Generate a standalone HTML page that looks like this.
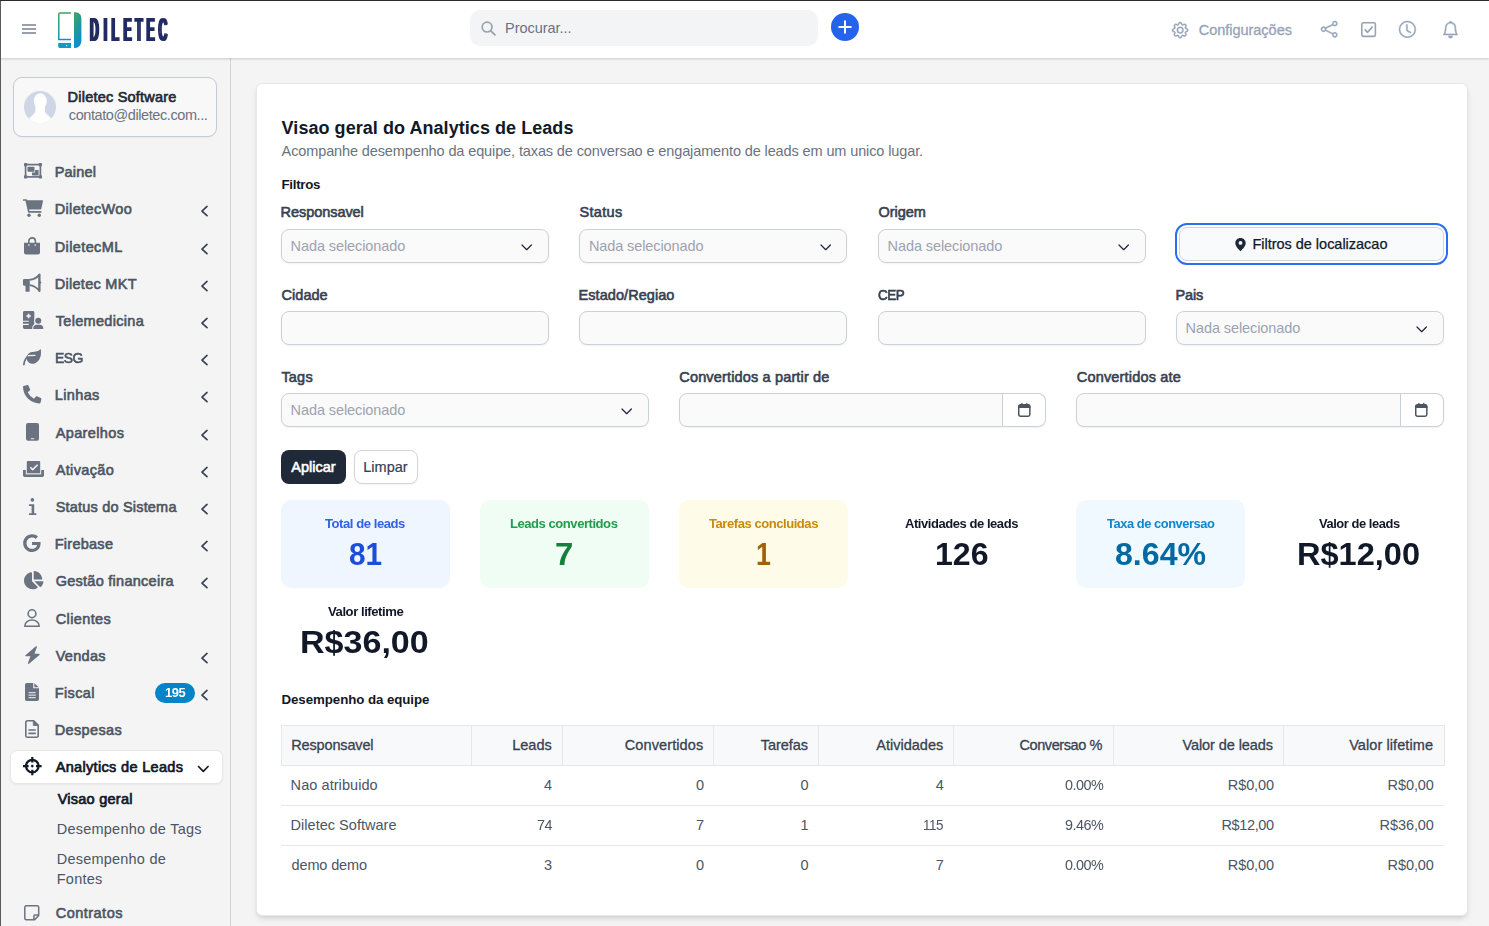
<!DOCTYPE html>
<html lang="pt-BR">
<head>
<meta charset="utf-8">
<title>Visao geral do Analytics de Leads - Diletec</title>
<style>

*{box-sizing:border-box;margin:0;padding:0}
html,body{width:1489px;height:926px;overflow:hidden;background:#f4f4f4;font-family:"Liberation Sans","DejaVu Sans",sans-serif;color:#111827}
ul,li{list-style:none}
a{color:inherit;text-decoration:none}
.t{position:absolute;display:block;white-space:pre;line-height:1;transform-origin:0 0;font-weight:400;margin:0}
button{border:0;font:inherit}
.abs,.ico{position:absolute;display:block}
.ico{overflow:visible}
#frame-top{left:0;top:0;width:1489px;height:1px;background:#2a2b2b;z-index:20}
#frame-left{left:0;top:0;width:1px;height:926px;background:#5a5a5a;z-index:19}
#topbar{left:0;top:0;width:1489px;height:58px;background:#fff;box-shadow:0 1px 2px rgba(0,0,0,.13),0 1px 4px rgba(0,0,0,.06);z-index:10}
.bar{left:22px;width:14px;height:2px;background:#9aa0ab}
#search{left:470px;top:10px;width:348px;height:36px;border-radius:10px;background:#f3f4f6}
#plus{left:831px;top:13px;width:28px;height:28px;border-radius:50%;background:#2563eb}
#sidebar{left:0;top:58px;width:231px;height:868px;border-right:1px solid #cdd5e1;background:#f4f4f4;z-index:5}
#user{left:13px;top:19px;width:204px;height:60px;border:1px solid #c6cad3;border-radius:9px;background:#f8f8f9;box-shadow:0 1px 1px rgba(0,0,0,.04)}
#avatar{left:24px;top:32.800px;width:32px;height:32.600px;border-radius:50%;background:#cfd6e6;overflow:hidden}
#active{left:9.5px;top:692px;width:213px;height:34px;border-radius:7px;background:#fff;border:1px solid #e6e8ec;box-shadow:0 1px 2px rgba(0,0,0,.05)}
#badge{left:155px;top:625px;width:40px;height:20px;border-radius:10px;background:#0284c7}
#card{left:256px;top:83px;width:1212px;height:833px;background:#fff;border-radius:6px;border:1px solid #e4e7eb;box-shadow:0 4px 6px -1px rgba(0,0,0,.1),0 2px 4px -2px rgba(0,0,0,.1)}
.inp{height:34px;border:1px solid #ccd1d9;border-radius:8px;background:#fafafb;box-shadow:0 1px 2px rgba(16,24,40,.06)}
.inp.l{border-radius:8px 0 0 8px}
.inp.r{border-radius:0 8px 8px 0;border-left:none;background:#fff}
#locbtn{left:1179px;top:227px;width:265px;height:34px;border:1px solid #d1d5db;border-radius:8px;background:#f9fafb;outline:2px solid #2a6ff0;outline-offset:2px}
#apply{left:281px;top:450px;width:65px;height:34px;border-radius:8px;background:#1f2937}
#clear{left:354px;top:450px;width:64px;height:34px;border-radius:8px;background:#fff;border:1px solid #d1d5db;box-shadow:0 1px 2px rgba(0,0,0,.05)}
.stat{top:500px;width:169px;height:88px;border-radius:10px}
.th{top:725px;height:41px;background:#f8f9fa;border:1px solid #e5e7eb;border-left:none}
.th.first{border-left:1px solid #e5e7eb}
.rowline{left:281px;width:1163px;height:1px;background:#e5e7eb}

</style>
</head>
<body>
<div id="frame-top" class="abs"></div><div id="frame-left" class="abs"></div>
<header id="topbar" class="abs">
<button class="abs" style="left:14px;top:17px;width:30px;height:24px;border:0;background:none" aria-label="menu"><i class="abs bar" style="left:8px;top:7px"></i><i class="abs bar" style="left:8px;top:11px"></i><i class="abs bar" style="left:8px;top:15px"></i></button>
<svg class="ico" style="left:57.5px;top:12px" width="112" height="36" viewBox="0 0 112 36" role="img" aria-label="Diletec" ><defs><linearGradient id="lg" x1="0" y1="0" x2="0.35" y2="1"><stop offset="0" stop-color="#45a45a"/><stop offset="0.5" stop-color="#1f9a96"/><stop offset="1" stop-color="#0a8fd0"/></linearGradient></defs><filter id="fat" x="-5%" y="-5%" width="110%" height="110%"><feMorphology operator="dilate" radius="1 0"/></filter><path d="M12.9 1.1 H1.9 A1.1 1.1 0 0 0 .8 2.2 V27.6 H12.9" fill="none" stroke="url(#lg)" stroke-width="1.5"/><path d="M.2 30.9 H13 V35.9 H1.6 A1.4 1.4 0 0 1 .2 34.5 Z" fill="#119ac4"/><rect x="8" y="33" width="1.2" height="1.2" fill="#d8f0fa"/><path d="M16 .2 H17.5 C21.5 .2 23.4 3.2 23.4 7 V28.5 C23.4 33 20.5 35.9 17 35.9 H16 Z" fill="url(#lg)"/><g filter="url(#fat)"><text transform="scale(0.375,1)" x="85.10 121.86 142.97 174.43 205.72 236.30 268.11" y="29.2" font-family="Liberation Sans, DejaVu Sans, sans-serif" font-weight="700" font-size="32.4" fill="#232a63">DILETEC</text></g></svg>
<form id="search" class="abs" role="search"><svg class="ico" style="left:10.5px;top:11.2px" width="15" height="15" viewBox="0 0 15 15" aria-hidden="true" ><circle cx="6.1" cy="6.1" r="4.9" fill="none" stroke="#9ca3af" stroke-width="1.7"/><path d="M9.8 9.8 L13.9 13.9" stroke="#9ca3af" stroke-width="1.9" stroke-linecap="round"/></svg><span class="t" style="left:35.00px;top:11.00px;font-size:14.5px;letter-spacing:-0.026px;color:#6b7280;">Procurar...</span></form>
<a id="plus" class="abs"><svg class="ico" style="left:7px;top:7px" width="14" height="14" viewBox="0 0 14 14" aria-hidden="true" ><path d="M7 1.2 V12.8 M1.2 7 H12.8" stroke="#fff" stroke-width="2" stroke-linecap="round"/></svg></a>
<nav>
<svg class="ico" style="left:1171.7px;top:21.7px" width="16.3" height="16.3" viewBox="0 0 16 16" aria-hidden="true" fill="#94a3b8" stroke="#94a3b8" stroke-width=".5"><path d="M8 4.754a3.246 3.246 0 1 0 0 6.492 3.246 3.246 0 0 0 0-6.492zM5.754 8a2.246 2.246 0 1 1 4.492 0 2.246 2.246 0 0 1-4.492 0z"/><path d="M9.796 1.343c-.527-1.79-3.065-1.79-3.592 0l-.094.319a.873.873 0 0 1-1.255.52l-.292-.16c-1.64-.892-3.433.902-2.54 2.541l.159.292a.873.873 0 0 1-.52 1.255l-.319.094c-1.79.527-1.79 3.065 0 3.592l.319.094a.873.873 0 0 1 .52 1.255l-.16.292c-.892 1.64.901 3.434 2.541 2.54l.292-.159a.873.873 0 0 1 1.255.52l.094.319c.527 1.79 3.065 1.79 3.592 0l.094-.319a.873.873 0 0 1 1.255-.52l.292.16c1.64.893 3.434-.902 2.54-2.541l-.159-.292a.873.873 0 0 1 .52-1.255l.319-.094c1.79-.527 1.79-3.065 0-3.592l-.319-.094a.873.873 0 0 1-.52-1.255l.16-.292c.893-1.64-.902-3.433-2.541-2.54l-.292.159a.873.873 0 0 1-1.255-.52l-.094-.319zm-2.633.283c.246-.835 1.428-.835 1.674 0l.094.319a1.873 1.873 0 0 0 2.693 1.115l.291-.16c.764-.415 1.6.42 1.184 1.185l-.159.292a1.873 1.873 0 0 0 1.116 2.692l.318.094c.835.246.835 1.428 0 1.674l-.319.094a1.873 1.873 0 0 0-1.115 2.693l.16.291c.415.764-.42 1.6-1.185 1.184l-.291-.159a1.873 1.873 0 0 0-2.693 1.116l-.094.318c-.246.835-1.428.835-1.674 0l-.094-.319a1.873 1.873 0 0 0-2.692-1.115l-.292.16c-.764.415-1.6-.42-1.184-1.185l.159-.291A1.873 1.873 0 0 0 1.945 8.93l-.319-.094c-.835-.246-.835-1.428 0-1.674l.319-.094A1.873 1.873 0 0 0 3.06 4.377l-.16-.292c-.415-.764.42-1.6 1.185-1.184l.292.159a1.873 1.873 0 0 0 2.692-1.115l.094-.319z"/></svg>
<span class="t" style="left:1198.70px;top:22.70px;font-size:14.5px;letter-spacing:-0.021px;color:#94a3b8;-webkit-text-stroke:0.3px currentColor;">Configurações</span>
<svg class="ico" style="left:1321.3px;top:21.2px" width="16.4" height="16.4" viewBox="0 0 16 16" aria-hidden="true" fill="#94a3b8" stroke="#94a3b8" stroke-width=".5"><path d="M13.5 1a1.5 1.5 0 1 0 0 3 1.5 1.5 0 0 0 0-3zM11 2.500a2.500 2.500 0 1 1 .603 1.628l-6.718 3.120a2.499 2.499 0 0 1 0 1.504l6.718 3.120a2.500 2.500 0 1 1-.488.876l-6.718-3.120a2.500 2.500 0 1 1 0-3.256l6.718-3.120A2.500 2.500 0 0 1 11 2.500zm-8.500 4a1.500 1.500 0 1 0 0 3 1.500 1.500 0 0 0 0-3zm11 5.500a1.500 1.500 0 1 0 0 3 1.500 1.500 0 0 0 0-3z"/></svg>
<svg class="ico" style="left:1361px;top:22px" width="15.2" height="15.2" viewBox="0 0 15.2 15.2" aria-hidden="true" ><rect x=".8" y=".8" width="13.6" height="13.6" rx="1.6" fill="none" stroke="#94a3b8" stroke-width="1.6"/><path d="M4.2 7.9 L6.6 10.3 L11.1 5.1" fill="none" stroke="#94a3b8" stroke-width="1.7" stroke-linecap="round" stroke-linejoin="round"/></svg>
<svg class="ico" style="left:1399.2px;top:21.1px" width="16.8" height="16.8" viewBox="0 0 16 16" aria-hidden="true" fill="#94a3b8" stroke="#94a3b8" stroke-width=".5"><path d="M8 3.500a.500.500 0 0 0-1 0V9a.500.500 0 0 0 .252.434l3.500 2a.500.500 0 0 0 .496-.868L8 8.710V3.500z"/><path d="M8 16A8 8 0 1 0 8 0a8 8 0 0 0 0 16zm7-8A7 7 0 1 1 1 8a7 7 0 0 1 14 0z"/></svg>
<svg class="ico" style="left:1441.7px;top:20.6px" width="17" height="17.3" viewBox="0 0 16 16" aria-hidden="true" fill="#94a3b8" stroke="#94a3b8" stroke-width=".5"><path d="M8 16a2 2 0 0 0 2-2H6a2 2 0 0 0 2 2zM8 1.918l-.797.161A4.002 4.002 0 0 0 4 6c0 .628-.134 2.197-.459 3.742-.16.767-.376 1.566-.663 2.258h10.244c-.287-.692-.502-1.490-.663-2.258C12.134 8.197 12 6.628 12 6a4.002 4.002 0 0 0-3.203-3.920L8 1.917zM14.220 12c.223.447.481.801.780 1H1c.299-.199.557-.553.780-1C2.680 10.200 3 6.880 3 6c0-2.420 1.720-4.440 4.005-4.901a1 1 0 1 1 1.990 0A5.002 5.002 0 0 1 13 6c0 .880.320 4.200 1.220 6z"/></svg>
</nav>
</header>
<aside id="sidebar" class="abs">
<div id="user" class="abs"></div>
<div id="avatar" class="abs"><svg class="ico" style="left:0px;top:0px" width="32" height="32" viewBox="0 0 32 32" aria-hidden="true" ><ellipse cx="16.300" cy="9.900" rx="6.500" ry="7.700" fill="#fff"/><path d="M11.400 14 V19.500 C11.400 23 7.300 24.200 4.300 28.800 V33 H28.300 V28.800 C25.300 24.200 20.900 23 20.900 19.500 V14 Z" fill="#fff"/></svg></div>
<span class="t" style="left:67.60px;top:32.00px;font-size:14.5px;letter-spacing:0.213px;color:#1f2937;-webkit-text-stroke:0.65px currentColor;">Diletec Software</span>
<span class="t" style="left:68.80px;top:49.80px;font-size:14.5px;letter-spacing:-0.413px;color:#6b7280;">contato@diletec.com...</span>
<ul>
<li>
<svg class="ico" style="left:24.2px;top:105.2px" width="18" height="15.5" viewBox="0 0 18 15.5" aria-hidden="true" ><rect x="1.600" y="1.600" width="14.800" height="12.300" fill="none" stroke="#6b7280" stroke-width="1.700"/><rect x="0" y="0" width="3.300" height="3.300" rx=".7" fill="#6b7280"/><rect x="0" y="12.2" width="3.300" height="3.300" rx=".7" fill="#6b7280"/><rect x="14.7" y="0" width="3.300" height="3.300" rx=".7" fill="#6b7280"/><rect x="14.7" y="12.2" width="3.300" height="3.300" rx=".7" fill="#6b7280"/><rect x="8" y="6.900" width="6.600" height="5.600" rx=".7" fill="#6b7280"/><rect x="2.900" y="3.100" width="8.200" height="6.300" rx=".9" fill="#f4f4f4"/><rect x="3.500" y="3.700" width="7" height="5" rx=".7" fill="#6b7280"/></svg>
<span class="t" style="left:54.70px;top:107.00px;font-size:14.5px;letter-spacing:0.183px;color:#4b5563;-webkit-text-stroke:0.6px currentColor;">Painel</span>
</li>
<li>
<svg class="ico" style="left:23.1px;top:141.1px" width="20.2" height="18.2" viewBox="0 0 20.2 18.2" aria-hidden="true" ><path d="M.700 1 H3.200 L5.800 12.900 H17.700" fill="none" stroke="#6b7280" stroke-width="1.700" stroke-linecap="round" stroke-linejoin="round"/><path d="M3.600 1.200 H19.400 A.7 .7 0 0 1 20 2 L18.300 9.700 A.9 .9 0 0 1 17.500 10.400 H5.500 Z" fill="#6b7280"/><circle cx="6" cy="16.300" r="1.700" fill="#6b7280"/><circle cx="16.300" cy="16.300" r="1.700" fill="#6b7280"/></svg>
<span class="t" style="left:54.70px;top:144.00px;font-size:14.5px;letter-spacing:0.355px;color:#4b5563;-webkit-text-stroke:0.6px currentColor;">DiletecWoo</span>
<svg class="ico" style="left:200.2px;top:146.7px" width="9" height="12.2" viewBox="0 0 9 12.2" aria-hidden="true" ><path d="M7 1.500 L2 6.100 L7 10.700" fill="none" stroke="#374151" stroke-width="1.700" stroke-linecap="round" stroke-linejoin="round"/></svg>
</li>
<li>
<svg class="ico" style="left:24.2px;top:179.2px" width="16" height="17.7" viewBox="0 0 16 17.7" aria-hidden="true" ><path d="M4.800 6.500 V4.200 A3.300 3.300 0 0 1 11.400 4.200 V6.500" fill="none" stroke="#6b7280" stroke-width="1.600"/><path d="M0 5.700 H16 V15.300 A2.300 2.300 0 0 1 13.700 17.600 H2.300 A2.300 2.300 0 0 1 0 15.300 Z" fill="#6b7280"/><circle cx="4.900" cy="8.100" r=".800" fill="#f4f4f4"/><circle cx="11.200" cy="8.100" r=".800" fill="#f4f4f4"/></svg>
<span class="t" style="left:54.70px;top:182.00px;font-size:14.5px;letter-spacing:0.388px;color:#4b5563;-webkit-text-stroke:0.6px currentColor;">DiletecML</span>
<svg class="ico" style="left:200.2px;top:184.7px" width="9" height="12.2" viewBox="0 0 9 12.2" aria-hidden="true" ><path d="M7 1.500 L2 6.100 L7 10.700" fill="none" stroke="#374151" stroke-width="1.700" stroke-linecap="round" stroke-linejoin="round"/></svg>
</li>
<li>
<svg class="ico" style="left:22.9px;top:216px" width="18.6" height="18" viewBox="0 0 18.6 18" aria-hidden="true" ><path d="M1.200 5 H6.800 V11.700 H6.600 V17.200 A.5 .5 0 0 1 6.100 17.700 H3 A.5 .5 0 0 1 2.500 17.200 V11.700 H1.200 A1.200 1.200 0 0 1 0 10.500 V6.200 A1.200 1.200 0 0 1 1.200 5 Z" fill="#6b7280"/><path d="M6.600 5.800 C10.500 5.500 13.800 3.700 16.300 .900 V16.600 C13.800 13.800 10.500 11.400 6.600 11.100" fill="none" stroke="#6b7280" stroke-width="1.900" stroke-linejoin="round"/><path d="M16.500 .300 V17.200" stroke="#6b7280" stroke-width="1.800" stroke-linecap="round"/><circle cx="17.300" cy="8.600" r="1.100" fill="#6b7280"/></svg>
<span class="t" style="left:54.70px;top:219.00px;font-size:14.5px;letter-spacing:0.290px;color:#4b5563;-webkit-text-stroke:0.6px currentColor;">Diletec MKT</span>
<svg class="ico" style="left:200.2px;top:221.7px" width="9" height="12.2" viewBox="0 0 9 12.2" aria-hidden="true" ><path d="M7 1.500 L2 6.100 L7 10.700" fill="none" stroke="#374151" stroke-width="1.700" stroke-linecap="round" stroke-linejoin="round"/></svg>
</li>
<li>
<svg class="ico" style="left:22.9px;top:252.8px" width="21" height="18.2" viewBox="0 0 21 18.2" aria-hidden="true" ><rect x="0" y="0" width="11.300" height="18" rx="1.500" fill="#6b7280"/><path d="M5.600 2.700 V7.300 M3.300 5 H7.900" stroke="#f4f4f4" stroke-width="1.600"/><path d="M0 10.200 H5.700 M0 13.400 H5.700" stroke="#f4f4f4" stroke-width="1.100"/><path d="M10.200 18.400 V17 C10.200 15 11.700 13.700 13.700 13.700 H16.800 C18.800 13.700 20.300 15 20.300 17 V18.400 Z" fill="#f4f4f4" stroke="#f4f4f4" stroke-width="2"/><circle cx="15.250" cy="9.850" r="3.900" fill="#f4f4f4"/><path d="M10.200 18.400 V17 C10.200 15 11.700 13.700 13.700 13.700 H16.800 C18.800 13.700 20.300 15 20.300 17 V18.400 Z" fill="#6b7280"/><rect x="9" y="18" width="12.500" height="1.600" fill="#f4f4f4"/><circle cx="15.250" cy="9.850" r="3" fill="#6b7280"/></svg>
<span class="t" style="left:55.70px;top:256.00px;font-size:14.5px;letter-spacing:0.312px;color:#4b5563;-webkit-text-stroke:0.6px currentColor;">Telemedicina</span>
<svg class="ico" style="left:200.2px;top:258.7px" width="9" height="12.2" viewBox="0 0 9 12.2" aria-hidden="true" ><path d="M7 1.500 L2 6.100 L7 10.700" fill="none" stroke="#374151" stroke-width="1.700" stroke-linecap="round" stroke-linejoin="round"/></svg>
</li>
<li>
<svg class="ico" style="left:22.7px;top:291.1px" width="19" height="16" viewBox="0 0 19 16" aria-hidden="true" ><path d="M17.700 .100 C15 3.500 10.500 2.300 7.200 3.600 C4.300 4.800 3.200 7.600 3.700 10.300 C4.400 13.700 8.200 15.600 11.600 14.400 C16.800 12.500 19 6.500 17.700 .100 Z" fill="#6b7280"/><path d="M.900 15.500 C1.300 11.200 3.300 8 6.800 6.300" fill="none" stroke="#6b7280" stroke-width="1.800" stroke-linecap="round"/><path d="M5.300 6.700 C7.300 6.300 9.500 6.300 12 6.300" fill="none" stroke="#f4f4f4" stroke-width="1.300" stroke-linecap="round"/></svg>
<span class="t" style="left:54.74px;top:293.00px;font-size:14.5px;letter-spacing:-0.508px;transform:scaleX(0.9602);color:#4b5563;-webkit-text-stroke:0.6px currentColor;">ESG</span>
<svg class="ico" style="left:200.2px;top:295.7px" width="9" height="12.2" viewBox="0 0 9 12.2" aria-hidden="true" ><path d="M7 1.500 L2 6.100 L7 10.700" fill="none" stroke="#374151" stroke-width="1.700" stroke-linecap="round" stroke-linejoin="round"/></svg>
</li>
<li>
<svg class="ico" style="left:22.7px;top:326.8px" width="18.4" height="18.4" viewBox="0 0 512 512" aria-hidden="true" ><path d="M497.39 361.8l-112-48a24 24 0 0 0-28 6.900l-49.600 60.600A370.660 370.660 0 0 1 130.600 204.110l60.600-49.600a23.940 23.940 0 0 0 6.900-28l-48-112A24.160 24.160 0 0 0 122.600.610l-104 24A24 24 0 0 0 0 48c0 256.500 207.900 464 464 464a24 24 0 0 0 23.400-18.600l24-104a24.290 24.290 0 0 0-14.010-27.600z" fill="#6b7280"/></svg>
<span class="t" style="left:54.70px;top:330.00px;font-size:14.5px;letter-spacing:0.384px;color:#4b5563;-webkit-text-stroke:0.6px currentColor;">Linhas</span>
<svg class="ico" style="left:200.2px;top:332.7px" width="9" height="12.2" viewBox="0 0 9 12.2" aria-hidden="true" ><path d="M7 1.500 L2 6.100 L7 10.700" fill="none" stroke="#374151" stroke-width="1.700" stroke-linecap="round" stroke-linejoin="round"/></svg>
</li>
<li>
<svg class="ico" style="left:25.7px;top:365.2px" width="13" height="17.8" viewBox="0 0 13 17.8" aria-hidden="true" ><rect x="0" y="0" width="13" height="17.800" rx="2" fill="#6b7280"/><rect x="4.800" y="15" width="3.400" height="1.300" fill="#c9ccd3"/></svg>
<span class="t" style="left:55.70px;top:368.00px;font-size:14.5px;letter-spacing:0.370px;color:#4b5563;-webkit-text-stroke:0.6px currentColor;">Aparelhos</span>
<svg class="ico" style="left:200.2px;top:370.7px" width="9" height="12.2" viewBox="0 0 9 12.2" aria-hidden="true" ><path d="M7 1.500 L2 6.100 L7 10.700" fill="none" stroke="#374151" stroke-width="1.700" stroke-linecap="round" stroke-linejoin="round"/></svg>
</li>
<li>
<svg class="ico" style="left:22.6px;top:403px" width="21" height="16" viewBox="0 0 21 16" aria-hidden="true" ><path d="M0 9 H2.800 V12.700 H18.200 V9 H21 V14.300 A1.700 1.700 0 0 1 19.300 16 H1.700 A1.700 1.700 0 0 1 0 14.300 Z" fill="#6b7280"/><rect x="3.800" y="0" width="13.400" height="12.500" rx="1" fill="#6b7280"/><path d="M7.200 6.200 L9.700 8.600 L14.600 3.700" fill="none" stroke="#f4f4f4" stroke-width="1.500"/><rect x="2.800" y="12.500" width="15.400" height=".9" fill="#f4f4f4"/></svg>
<span class="t" style="left:55.70px;top:405.00px;font-size:14.5px;letter-spacing:0.350px;color:#4b5563;-webkit-text-stroke:0.6px currentColor;">Ativação</span>
<svg class="ico" style="left:200.2px;top:407.7px" width="9" height="12.2" viewBox="0 0 9 12.2" aria-hidden="true" ><path d="M7 1.500 L2 6.100 L7 10.700" fill="none" stroke="#374151" stroke-width="1.700" stroke-linecap="round" stroke-linejoin="round"/></svg>
</li>
<li>
<svg class="ico" style="left:27.8px;top:440px" width="9" height="17" viewBox="0 0 9 17" aria-hidden="true" ><circle cx="4.400" cy="1.900" r="1.800" fill="#6b7280"/><path d="M1.400 6.200 H6.200 V15.200 H7.900 A.5 .5 0 0 1 8.400 15.700 V16.500 A.5 .5 0 0 1 7.900 17 H1.400 A.5 .5 0 0 1 .900 16.500 V15.700 A.5 .5 0 0 1 1.400 15.200 H3.600 V8 H1.400 A.5 .5 0 0 1 .900 7.500 V6.700 A.5 .5 0 0 1 1.400 6.200 Z" fill="#6b7280"/></svg>
<span class="t" style="left:55.70px;top:442.00px;font-size:14.5px;letter-spacing:0.193px;color:#4b5563;-webkit-text-stroke:0.6px currentColor;">Status do Sistema</span>
<svg class="ico" style="left:200.2px;top:444.7px" width="9" height="12.2" viewBox="0 0 9 12.2" aria-hidden="true" ><path d="M7 1.500 L2 6.100 L7 10.700" fill="none" stroke="#374151" stroke-width="1.700" stroke-linecap="round" stroke-linejoin="round"/></svg>
</li>
<li>
<svg class="ico" style="left:23.2px;top:475.9px" width="17.8" height="18.3" viewBox="0 0 488 512" aria-hidden="true" ><path d="M488 261.800C488 403.300 391.100 504 248 504 110.800 504 0 393.200 0 256S110.800 8 248 8c66.800 0 123 24.500 166.300 64.900l-67.500 64.900C258.500 52.600 94.300 116.600 94.300 256c0 86.500 69.100 156.600 153.700 156.600 98.200 0 135-70.400 140.800-106.900H248v-85.300h236.100c2.300 12.700 3.900 24.900 3.900 41.400z" fill="#6b7280"/></svg>
<span class="t" style="left:54.70px;top:479.00px;font-size:14.5px;letter-spacing:0.264px;color:#4b5563;-webkit-text-stroke:0.6px currentColor;">Firebase</span>
<svg class="ico" style="left:200.2px;top:481.7px" width="9" height="12.2" viewBox="0 0 9 12.2" aria-hidden="true" ><path d="M7 1.500 L2 6.100 L7 10.700" fill="none" stroke="#374151" stroke-width="1.700" stroke-linecap="round" stroke-linejoin="round"/></svg>
</li>
<li>
<svg class="ico" style="left:24px;top:512.7px" width="19.4" height="18.3" viewBox="0 0 544 512" aria-hidden="true" ><path d="M527.790 288H290.500l158.030 158.030c6.040 6.040 15.980 6.530 22.190.680 38.700-36.460 65.320-85.610 73.130-140.860 1.340-9.460-6.510-17.850-16.060-17.850zm-15.830-64.800C503.720 103.740 408.260 8.280 288.800.040 279.680-.590 272 7.100 272 16.240V240h223.770c9.140 0 16.820-7.680 16.190-16.800zM224 288V50.710c0-9.550-8.390-17.400-17.840-16.060C86.990 51.490-4.100 155.600.140 280.370 4.500 408.510 114.830 513.590 243.030 511.980c50.400-.630 96.970-16.870 135.260-44.030 7.900-5.600 8.420-17.230 1.570-24.080L224 288z" fill="#6b7280"/></svg>
<span class="t" style="left:55.70px;top:516.00px;font-size:14.5px;letter-spacing:0.263px;color:#4b5563;-webkit-text-stroke:0.6px currentColor;">Gestão financeira</span>
<svg class="ico" style="left:200.2px;top:518.7px" width="9" height="12.2" viewBox="0 0 9 12.2" aria-hidden="true" ><path d="M7 1.500 L2 6.100 L7 10.700" fill="none" stroke="#374151" stroke-width="1.700" stroke-linecap="round" stroke-linejoin="round"/></svg>
</li>
<li>
<svg class="ico" style="left:24.2px;top:550.9px" width="16" height="18.2" viewBox="0 0 16 18.2" aria-hidden="true" ><circle cx="8" cy="4.700" r="3.900" fill="none" stroke="#6b7280" stroke-width="1.600"/><path d="M.800 17.300 C.800 9 15.200 9 15.200 17.300 Z" fill="none" stroke="#6b7280" stroke-width="1.600" stroke-linejoin="round"/></svg>
<span class="t" style="left:55.70px;top:554.00px;font-size:14.5px;letter-spacing:0.381px;color:#4b5563;-webkit-text-stroke:0.6px currentColor;">Clientes</span>
</li>
<li>
<svg class="ico" style="left:24.8px;top:587.8px" width="15" height="18.2" viewBox="0 0 15 18.2" aria-hidden="true" ><path d="M11.300 .800 L.900 9.700 H6.300 L3.600 17.300 L14 8.400 H8.600 Z" fill="#6b7280" stroke="#6b7280" stroke-width="1.300" stroke-linejoin="round"/></svg>
<span class="t" style="left:55.70px;top:591.00px;font-size:14.5px;letter-spacing:0.294px;color:#4b5563;-webkit-text-stroke:0.6px currentColor;">Vendas</span>
<svg class="ico" style="left:200.2px;top:593.7px" width="9" height="12.2" viewBox="0 0 9 12.2" aria-hidden="true" ><path d="M7 1.500 L2 6.100 L7 10.700" fill="none" stroke="#374151" stroke-width="1.700" stroke-linecap="round" stroke-linejoin="round"/></svg>
</li>
<li>
<svg class="ico" style="left:25.1px;top:625px" width="14" height="18" viewBox="0 0 14 18" aria-hidden="true" ><path d="M1.800 0 H8.200 V5.200 H14 V16.200 A1.800 1.800 0 0 1 12.200 18 H1.800 A1.800 1.800 0 0 1 0 16.200 V1.800 A1.800 1.800 0 0 1 1.800 0 Z" fill="#6b7280"/><path d="M9.300 .200 L13.800 4.300 H9.300 Z" fill="#6b7280"/><path d="M3.600 9.700 H10.600 M3.600 12.200 H10.600 M3.600 14.700 H10.600" stroke="#f4f4f4" stroke-width="1"/><path d="M3.600 12.200 H10.600" stroke="#b9bcc4" stroke-width="1.100"/></svg>
<span class="t" style="left:54.70px;top:628.00px;font-size:14.5px;letter-spacing:0.391px;color:#4b5563;-webkit-text-stroke:0.6px currentColor;">Fiscal</span>
<span id="badge" class="abs"><span class="t" style="left:9.90px;top:3.00px;font-size:13px;font-weight:700;letter-spacing:-0.455px;transform:scaleX(0.9927);color:#fff;">195</span></span>
<svg class="ico" style="left:200.2px;top:630.7px" width="9" height="12.2" viewBox="0 0 9 12.2" aria-hidden="true" ><path d="M7 1.500 L2 6.100 L7 10.700" fill="none" stroke="#374151" stroke-width="1.700" stroke-linecap="round" stroke-linejoin="round"/></svg>
</li>
<li>
<svg class="ico" style="left:25.1px;top:662px" width="14" height="18" viewBox="0 0 14 18" aria-hidden="true" ><path d="M2.300 .800 H8.700 L13.200 5 V15.700 A1.500 1.500 0 0 1 11.700 17.200 H2.300 A1.500 1.500 0 0 1 .800 15.700 V2.300 A1.500 1.500 0 0 1 2.300 .800 Z" fill="none" stroke="#6b7280" stroke-width="1.600" stroke-linejoin="round"/><path d="M8.300 .800 V5.500 H13.200 L8.700 .800 Z" fill="#6b7280" stroke="#6b7280" stroke-width=".8" stroke-linejoin="round"/><path d="M4 10 H10.200 M4 13.400 H10.200" stroke="#6b7280" stroke-width="1.600" stroke-linecap="round"/></svg>
<span class="t" style="left:54.70px;top:665.00px;font-size:14.5px;letter-spacing:0.367px;color:#4b5563;-webkit-text-stroke:0.6px currentColor;">Despesas</span>
</li>
<li><div id="active" class="abs"></div>
<svg class="ico" style="left:22.6px;top:699px" width="18.6" height="18.2" viewBox="0 0 18.6 18.2" aria-hidden="true" ><circle cx="9.300" cy="9.100" r="6.300" fill="none" stroke="#111827" stroke-width="2.200"/><path d="M9.300 0 V5.400 M9.300 12.800 V18.200 M0 9.100 H5.600 M13 9.100 H18.600" stroke="#111827" stroke-width="2.200"/><circle cx="9.300" cy="9.100" r="1.300" fill="#111827"/></svg>
<span class="t" style="left:55.70px;top:702.00px;font-size:14.5px;letter-spacing:0.326px;color:#111827;-webkit-text-stroke:0.7px currentColor;">Analytics de Leads</span>
<svg class="ico" style="left:196.8px;top:707px" width="12.6" height="8" viewBox="0 0 12.6 8" aria-hidden="true" ><path d="M1.500 1.500 L6.300 6.300 L11.100 1.500" fill="none" stroke="#111827" stroke-width="1.700" stroke-linecap="round" stroke-linejoin="round"/></svg>
<ul>
<li><span class="t" style="left:57.70px;top:734.00px;font-size:14.5px;letter-spacing:0.244px;color:#111827;-webkit-text-stroke:0.7px currentColor;">Visao geral</span></li>
<li><span class="t" style="left:56.70px;top:764.00px;font-size:14.5px;letter-spacing:0.235px;color:#4b5563;">Desempenho de Tags</span></li>
<li><span class="t" style="left:56.70px;top:793.60px;font-size:14.5px;letter-spacing:0.221px;color:#4b5563;">Desempenho de</span><span class="t" style="left:56.70px;top:813.70px;font-size:14.5px;letter-spacing:0.264px;color:#4b5563;">Fontes</span></li>
</ul></li>
<li><svg class="ico" style="left:24.4px;top:847.4px" width="15.5" height="15.4" viewBox="0 0 15.5 15.4" aria-hidden="true" ><path d="M2.300 .750 H13.200 A1.500 1.500 0 0 1 14.700 2.250 V10.600 L10.700 14.650 H2.300 A1.500 1.500 0 0 1 .800 13.150 V2.250 A1.500 1.500 0 0 1 2.300 .750 Z" fill="none" stroke="#6b7280" stroke-width="1.500" stroke-linejoin="round"/><path d="M9.900 14.400 V11 A1 1 0 0 1 10.900 10 H14.500" fill="none" stroke="#6b7280" stroke-width="1.500"/></svg><span class="t" style="left:55.70px;top:848.30px;font-size:14.5px;letter-spacing:0.486px;color:#4b5563;-webkit-text-stroke:0.6px currentColor;">Contratos</span></li>
</ul>
</aside>
<main>
<section id="card" class="abs"><div class="abs" style="left:-257px;top:-84px;width:0;height:0">
<h1 class="t" style="left:281.60px;top:119.00px;font-size:18px;font-weight:700;letter-spacing:0.054px;color:#111827;">Visao geral do Analytics de Leads</h1>
<p class="t" style="left:281.60px;top:144.00px;font-size:14.5px;letter-spacing:-0.117px;color:#6b7280;">Acompanhe desempenho da equipe, taxas de conversao e engajamento de leads em um unico lugar.</p>
<h2 class="t" style="left:281.50px;top:178.30px;font-size:13.3px;font-weight:700;letter-spacing:-0.273px;color:#111827;">Filtros</h2>
<label class="t" style="left:280.60px;top:204.80px;font-size:14.5px;letter-spacing:-0.061px;color:#374151;-webkit-text-stroke:0.6px currentColor;">Responsavel</label>
<label class="t" style="left:579.60px;top:204.80px;font-size:14.5px;letter-spacing:0.289px;color:#374151;-webkit-text-stroke:0.6px currentColor;">Status</label>
<label class="t" style="left:878.40px;top:204.80px;font-size:14.5px;letter-spacing:-0.031px;color:#374151;-webkit-text-stroke:0.6px currentColor;">Origem</label>
<div class="abs inp" style="left:281px;top:229px;width:268px"></div>
<span class="t" style="left:290.60px;top:239.20px;font-size:14.5px;letter-spacing:-0.095px;color:#9ca3af;">Nada selecionado</span>
<svg class="ico" style="left:521.3px;top:243.6px" width="11.4" height="7.6" viewBox="0 0 11.4 7.6" aria-hidden="true" ><path d="M1 1 L5.700 5.700 L10.400 1" fill="none" stroke="#1f2937" stroke-width="1.250" stroke-linecap="round" stroke-linejoin="round"/></svg>
<div class="abs inp" style="left:579.3px;top:229px;width:268px"></div>
<span class="t" style="left:588.90px;top:239.20px;font-size:14.5px;letter-spacing:-0.095px;color:#9ca3af;">Nada selecionado</span>
<svg class="ico" style="left:819.6px;top:243.6px" width="11.4" height="7.6" viewBox="0 0 11.4 7.6" aria-hidden="true" ><path d="M1 1 L5.700 5.700 L10.400 1" fill="none" stroke="#1f2937" stroke-width="1.250" stroke-linecap="round" stroke-linejoin="round"/></svg>
<div class="abs inp" style="left:878px;top:229px;width:268px"></div>
<span class="t" style="left:887.60px;top:239.20px;font-size:14.5px;letter-spacing:-0.095px;color:#9ca3af;">Nada selecionado</span>
<svg class="ico" style="left:1118.3px;top:243.6px" width="11.4" height="7.6" viewBox="0 0 11.4 7.6" aria-hidden="true" ><path d="M1 1 L5.700 5.700 L10.400 1" fill="none" stroke="#1f2937" stroke-width="1.250" stroke-linecap="round" stroke-linejoin="round"/></svg>
<button id="locbtn" class="abs"></button>
<svg class="ico" style="left:1234.6px;top:237.7px" width="11" height="13.4" viewBox="0 0 11 13.4" aria-hidden="true" ><path d="M5.500 0 C8.500 0 10.700 2.200 10.700 5 C10.700 8.300 7.400 11.300 5.500 13.300 C3.600 11.300 .3 8.300 .3 5 C.3 2.200 2.500 0 5.500 0 Z" fill="#1f2937"/><circle cx="5.500" cy="4.900" r="1.900" fill="#f9fafb"/></svg>
<span class="t" style="left:1252.40px;top:237.40px;font-size:14.5px;letter-spacing:-0.016px;color:#111827;-webkit-text-stroke:0.25px currentColor;">Filtros de localizacao</span>
<label class="t" style="left:281.60px;top:287.90px;font-size:14.5px;letter-spacing:0.023px;color:#374151;-webkit-text-stroke:0.6px currentColor;">Cidade</label>
<label class="t" style="left:578.60px;top:287.90px;font-size:14.5px;letter-spacing:0.054px;color:#374151;-webkit-text-stroke:0.6px currentColor;">Estado/Regiao</label>
<label class="t" style="left:878.40px;top:287.90px;font-size:14.5px;letter-spacing:-0.508px;transform:scaleX(0.9315);color:#374151;-webkit-text-stroke:0.6px currentColor;">CEP</label>
<label class="t" style="left:1175.50px;top:287.90px;font-size:14.5px;letter-spacing:-0.119px;color:#374151;-webkit-text-stroke:0.6px currentColor;">Pais</label>
<div class="abs inp" style="left:281px;top:311px;width:268px"></div>
<div class="abs inp" style="left:579.3px;top:311px;width:268px"></div>
<div class="abs inp" style="left:878px;top:311px;width:268px"></div>
<div class="abs inp" style="left:1176px;top:311px;width:268px"></div>
<span class="t" style="left:1185.60px;top:321.20px;font-size:14.5px;letter-spacing:-0.095px;color:#9ca3af;">Nada selecionado</span>
<svg class="ico" style="left:1416.3px;top:325.6px" width="11.4" height="7.6" viewBox="0 0 11.4 7.6" aria-hidden="true" ><path d="M1 1 L5.700 5.700 L10.400 1" fill="none" stroke="#1f2937" stroke-width="1.250" stroke-linecap="round" stroke-linejoin="round"/></svg>
<label class="t" style="left:281.40px;top:370.00px;font-size:14.5px;letter-spacing:0.207px;color:#374151;-webkit-text-stroke:0.6px currentColor;">Tags</label>
<label class="t" style="left:679.30px;top:370.00px;font-size:14.5px;letter-spacing:0.154px;color:#374151;-webkit-text-stroke:0.6px currentColor;">Convertidos a partir de</label>
<label class="t" style="left:1076.80px;top:370.00px;font-size:14.5px;letter-spacing:0.179px;color:#374151;-webkit-text-stroke:0.6px currentColor;">Convertidos ate</label>
<div class="abs inp" style="left:281px;top:393px;width:368px"></div>
<span class="t" style="left:290.60px;top:403.20px;font-size:14.5px;letter-spacing:-0.095px;color:#9ca3af;">Nada selecionado</span>
<svg class="ico" style="left:621.3px;top:407.6px" width="11.4" height="7.6" viewBox="0 0 11.4 7.6" aria-hidden="true" ><path d="M1 1 L5.700 5.700 L10.400 1" fill="none" stroke="#1f2937" stroke-width="1.250" stroke-linecap="round" stroke-linejoin="round"/></svg>
<div class="abs inp l" style="left:679px;top:393px;width:324px"></div><div class="abs inp r" style="left:1003px;top:393px;width:43px"></div>
<svg class="ico" style="left:1017.5px;top:403px" width="12.6" height="14" viewBox="0 0 12.6 14" aria-hidden="true" ><rect x=".75" y="1.800" width="11.100" height="11.400" rx="1.700" fill="none" stroke="#4b5563" stroke-width="1.500"/><path d="M.2 3.500 A1.700 1.700 0 0 1 1.900 1.800 H10.700 A1.700 1.700 0 0 1 12.400 3.500 V5 H.2 Z" fill="#4b5563"/><path d="M3.900 .3 V2 M8.800 .3 V2" stroke="#4b5563" stroke-width="1.300" stroke-linecap="round"/></svg>
<div class="abs inp l" style="left:1076px;top:393px;width:325px"></div><div class="abs inp r" style="left:1401px;top:393px;width:43px"></div>
<svg class="ico" style="left:1415px;top:403px" width="12.6" height="14" viewBox="0 0 12.6 14" aria-hidden="true" ><rect x=".75" y="1.800" width="11.100" height="11.400" rx="1.700" fill="none" stroke="#4b5563" stroke-width="1.500"/><path d="M.2 3.500 A1.700 1.700 0 0 1 1.900 1.800 H10.700 A1.700 1.700 0 0 1 12.400 3.500 V5 H.2 Z" fill="#4b5563"/><path d="M3.900 .3 V2 M8.800 .3 V2" stroke="#4b5563" stroke-width="1.300" stroke-linecap="round"/></svg>
<button id="apply" class="abs"></button>
<span class="t" style="left:291.20px;top:460.20px;font-size:14.5px;letter-spacing:0.018px;color:#fff;-webkit-text-stroke:0.6px currentColor;">Aplicar</span>
<button id="clear" class="abs"></button>
<span class="t" style="left:363.30px;top:460.20px;font-size:14.5px;color:#374151;-webkit-text-stroke:0.2px currentColor;">Limpar</span>
<div class="abs stat" style="left:281px;background:#eff6ff"></div>
<span class="t" style="left:325.40px;top:517.20px;font-size:13.3px;font-weight:700;letter-spacing:-0.466px;transform:scaleX(0.9848);color:#2f62e8;">Total de leads</span>
<span class="t" style="left:348.60px;top:539.00px;font-size:31.5px;font-weight:700;transform:scaleX(0.9457);color:#1d4ed8;">81</span>
<div class="abs stat" style="left:480px;background:#f0fdf4"></div>
<span class="t" style="left:510.45px;top:517.20px;font-size:13.3px;font-weight:700;letter-spacing:-0.466px;transform:scaleX(0.9804);color:#1f9d4b;">Leads convertidos</span>
<span class="t" style="left:554.81px;top:539.00px;font-size:31.5px;font-weight:700;transform:scaleX(1.0437);color:#15803d;">7</span>
<div class="abs stat" style="left:679px;background:#fefce8"></div>
<span class="t" style="left:708.70px;top:517.20px;font-size:13.3px;font-weight:700;letter-spacing:-0.466px;transform:scaleX(0.9806);color:#c98b0a;">Tarefas concluidas</span>
<span class="t" style="left:755.55px;top:539.00px;font-size:31.5px;font-weight:700;transform:scaleX(0.8500);color:#a16207;">1</span>
<span class="t" style="left:905.40px;top:517.20px;font-size:13.3px;font-weight:700;letter-spacing:-0.466px;transform:scaleX(0.9794);color:#111827;">Atividades de leads</span>
<span class="t" style="left:934.88px;top:539.00px;font-size:31.5px;font-weight:700;transform:scaleX(1.0189);color:#111827;">126</span>
<div class="abs stat" style="left:1076px;background:#f0f9ff"></div>
<span class="t" style="left:1106.90px;top:517.20px;font-size:13.3px;font-weight:700;letter-spacing:-0.466px;transform:scaleX(0.9697);color:#1186c9;">Taxa de conversao</span>
<span class="t" style="left:1114.78px;top:539.00px;font-size:31.5px;font-weight:700;transform:scaleX(1.0192);color:#0369a1;">8.64%</span>
<span class="t" style="left:1319.25px;top:517.20px;font-size:13.3px;font-weight:700;letter-spacing:-0.466px;transform:scaleX(0.9725);color:#111827;">Valor de leads</span>
<span class="t" style="left:1297.33px;top:539.00px;font-size:31.5px;font-weight:700;transform:scaleX(1.0328);color:#111827;">R$12,00</span>
<span class="t" style="left:327.85px;top:605.00px;font-size:13.3px;font-weight:700;letter-spacing:-0.466px;transform:scaleX(0.9866);color:#111827;">Valor lifetime</span>
<span class="t" style="left:300.04px;top:627.00px;font-size:31.5px;font-weight:700;transform:scaleX(1.0808);color:#111827;">R$36,00</span>
<h2 class="t" style="left:281.50px;top:692.80px;font-size:13.3px;font-weight:700;letter-spacing:-0.071px;color:#111827;">Desempenho da equipe</h2>
<div class="abs th first" style="left:281px;width:190.5px"></div>
<div class="abs th" style="left:471.5px;width:91.0px"></div>
<div class="abs th" style="left:562.5px;width:151.0px"></div>
<div class="abs th" style="left:713.5px;width:105.0px"></div>
<div class="abs th" style="left:818.5px;width:135.0px"></div>
<div class="abs th" style="left:953.5px;width:160.0px"></div>
<div class="abs th" style="left:1113.5px;width:170.0px"></div>
<div class="abs th" style="left:1283.5px;width:161.0px"></div>
<span class="t" style="left:291.30px;top:738.30px;font-size:14.5px;letter-spacing:-0.161px;color:#374151;-webkit-text-stroke:0.3px currentColor;">Responsavel</span>
<span class="t" style="left:512.20px;top:738.30px;font-size:14.5px;letter-spacing:0.011px;color:#374151;-webkit-text-stroke:0.3px currentColor;">Leads</span>
<span class="t" style="left:624.70px;top:738.30px;font-size:14.5px;letter-spacing:0.118px;color:#374151;-webkit-text-stroke:0.3px currentColor;">Convertidos</span>
<span class="t" style="left:760.80px;top:738.30px;font-size:14.5px;letter-spacing:-0.050px;color:#374151;-webkit-text-stroke:0.3px currentColor;">Tarefas</span>
<span class="t" style="left:876.30px;top:738.30px;font-size:14.5px;letter-spacing:0.006px;color:#374151;-webkit-text-stroke:0.3px currentColor;">Atividades</span>
<span class="t" style="left:1019.40px;top:738.30px;font-size:14.5px;letter-spacing:-0.395px;color:#374151;-webkit-text-stroke:0.3px currentColor;">Conversao %</span>
<span class="t" style="left:1182.40px;top:738.30px;font-size:14.5px;letter-spacing:-0.075px;color:#374151;-webkit-text-stroke:0.3px currentColor;">Valor de leads</span>
<span class="t" style="left:1349.20px;top:738.30px;font-size:14.5px;letter-spacing:0.079px;color:#374151;-webkit-text-stroke:0.3px currentColor;">Valor lifetime</span>
<div class="abs rowline" style="top:805px"></div><div class="abs rowline" style="top:845px"></div>
<span class="t" style="left:290.60px;top:778.00px;font-size:14.5px;letter-spacing:0.068px;color:#4b5563;">Nao atribuido</span>
<span class="t" style="left:544.00px;top:778.00px;font-size:14.5px;color:#4b5563;">4</span>
<span class="t" style="left:696.00px;top:778.00px;font-size:14.5px;color:#4b5563;">0</span>
<span class="t" style="left:800.60px;top:778.00px;font-size:14.5px;color:#4b5563;">0</span>
<span class="t" style="left:935.80px;top:778.00px;font-size:14.5px;color:#4b5563;">4</span>
<span class="t" style="left:1064.70px;top:778.00px;font-size:14.5px;letter-spacing:-0.508px;transform:scaleX(0.9926);color:#4b5563;">0.00%</span>
<span class="t" style="left:1227.80px;top:778.00px;font-size:14.5px;letter-spacing:-0.099px;color:#4b5563;">R$0,00</span>
<span class="t" style="left:1387.60px;top:778.00px;font-size:14.5px;letter-spacing:-0.099px;color:#4b5563;">R$0,00</span>
<span class="t" style="left:290.60px;top:818.20px;font-size:14.5px;letter-spacing:0.020px;color:#4b5563;">Diletec Software</span>
<span class="t" style="left:536.60px;top:818.20px;font-size:14.5px;letter-spacing:-0.508px;transform:scaleX(0.9899);color:#4b5563;">74</span>
<span class="t" style="left:696.00px;top:818.20px;font-size:14.5px;color:#4b5563;">7</span>
<span class="t" style="left:800.60px;top:818.20px;font-size:14.5px;color:#4b5563;">1</span>
<span class="t" style="left:923.37px;top:818.20px;font-size:14.5px;letter-spacing:-0.508px;transform:scaleX(0.9269);color:#4b5563;">115</span>
<span class="t" style="left:1064.70px;top:818.20px;font-size:14.5px;letter-spacing:-0.508px;transform:scaleX(0.9926);color:#4b5563;">9.46%</span>
<span class="t" style="left:1221.50px;top:818.20px;font-size:14.5px;letter-spacing:-0.376px;color:#4b5563;">R$12,00</span>
<span class="t" style="left:1379.60px;top:818.20px;font-size:14.5px;letter-spacing:-0.093px;color:#4b5563;">R$36,00</span>
<span class="t" style="left:291.60px;top:858.40px;font-size:14.5px;letter-spacing:-0.151px;color:#4b5563;">demo demo</span>
<span class="t" style="left:544.00px;top:858.40px;font-size:14.5px;color:#4b5563;">3</span>
<span class="t" style="left:696.00px;top:858.40px;font-size:14.5px;color:#4b5563;">0</span>
<span class="t" style="left:800.60px;top:858.40px;font-size:14.5px;color:#4b5563;">0</span>
<span class="t" style="left:935.80px;top:858.40px;font-size:14.5px;color:#4b5563;">7</span>
<span class="t" style="left:1064.70px;top:858.40px;font-size:14.5px;letter-spacing:-0.508px;transform:scaleX(0.9926);color:#4b5563;">0.00%</span>
<span class="t" style="left:1227.80px;top:858.40px;font-size:14.5px;letter-spacing:-0.099px;color:#4b5563;">R$0,00</span>
<span class="t" style="left:1387.60px;top:858.40px;font-size:14.5px;letter-spacing:-0.099px;color:#4b5563;">R$0,00</span>
</div></section>
</main>
</body>
</html>
